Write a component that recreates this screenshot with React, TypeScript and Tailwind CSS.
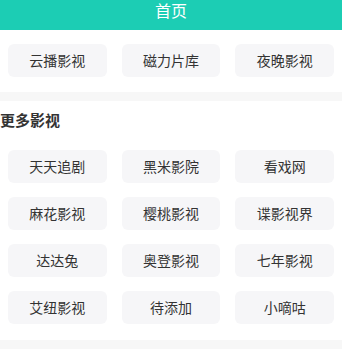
const top = ['云播影视', '磁力片库', '夜晚影视']
const more = [
  '天天追剧', '黑米影院', '看戏网',
  '麻花影视', '樱桃影视', '谍影视界',
  '达达兔', '奥登影视', '七年影视',
  '艾纽影视', '待添加', '小嘀咕',
]

function Tile({ label }: { label: string }) {
  return (
    <div className="h-[33px] rounded-md bg-[#f6f6f8] flex items-center justify-center text-[14px] text-[#333]">
      {label}
    </div>
  )
}

export default function App() {
  return (
    <div
      className="w-[342px] h-[349px] overflow-hidden bg-[#f7f7f7]"
      style={{ fontFamily: '"Noto Sans CJK SC", "Noto Sans", sans-serif' }}
    >
      <header className="h-[30px] bg-[#1ccdb4] flex justify-center">
        <h1 className="text-white text-[16px] leading-[20px]">首页</h1>
      </header>

      <section className="bg-white px-2 pt-[14px] pb-[15px]">
        <div className="grid grid-cols-3 gap-x-[15px]">
          {top.map((t) => (
            <Tile key={t} label={t} />
          ))}
        </div>
      </section>

      <section className="mt-[9px] bg-white pt-[9px] pb-[16px]">
        <h2 className="text-[15px] leading-[20px] font-bold text-[#333] mb-[20px]">更多影视</h2>
        <div className="grid grid-cols-3 gap-x-[15px] gap-y-[14px] px-2">
          {more.map((t) => (
            <Tile key={t} label={t} />
          ))}
        </div>
      </section>
    </div>
  )
}
